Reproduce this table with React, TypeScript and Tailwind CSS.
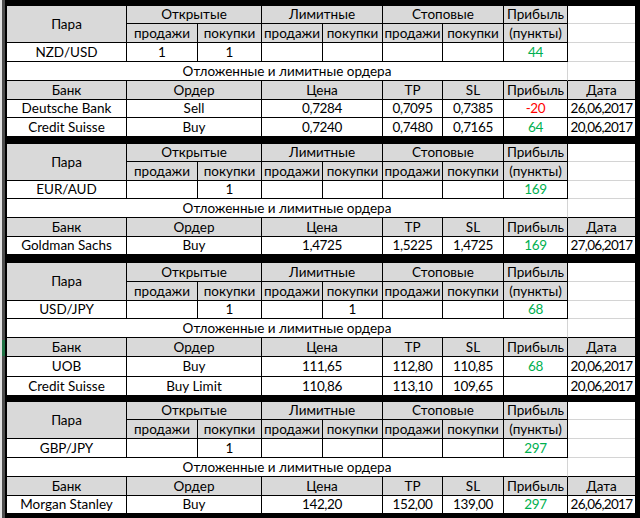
import React from "react";

type Order = {
  bank: string;
  order: string;
  price: string;
  tp: string;
  sl: string;
  profit: string;
  date: string;
};

type SectionProps = {
  pair: string;
  open: [string, string];
  limit: [string, string];
  stop: [string, string];
  profit: string;
  orders: Order[];
  rows: string;
};

const GRID = "grid grid-cols-[120px_71px_64px_61px_60px_60px_61px_64px_67px]";

function Cell({ className = "", children }: { className?: string; children?: React.ReactNode }) {
  return (
    <div className={`flex items-center justify-center pt-[1px] whitespace-nowrap border-r border-b border-black ${className}`}>
      {children}
    </div>
  );
}

function profitColor(p: string) {
  if (p.startsWith("-")) return "text-[#ff0000] tracking-[-0.4px]";
  return "text-[#00b050] tracking-[-0.4px]";
}

function Section({ pair, open, limit, stop, profit, orders, rows }: SectionProps) {
  const head = "bg-[#d9d9d9]";
  const free = "bg-white border-r-0 border-b-[#d4d4d4]";
  const num = "tracking-[-0.4px]";
  return (
    <div className={`${GRID} ${rows} bg-white`}>
      {/* header */}
      <Cell className={`${head} row-span-2`}>Пара</Cell>
      <Cell className={`${head} col-span-2`}>Открытые</Cell>
      <Cell className={`${head} col-span-2`}>Лимитные</Cell>
      <Cell className={`${head} col-span-2`}>Стоповые</Cell>
      <Cell className={head}>Прибыль</Cell>
      <Cell className={free} />

      <Cell className={head}>продажи</Cell>
      <Cell className={head}>покупки</Cell>
      <Cell className={head}>продажи</Cell>
      <Cell className={head}>покупки</Cell>
      <Cell className={head}>продажи</Cell>
      <Cell className={head}>покупки</Cell>
      <Cell className={head}>(пункты)</Cell>
      <Cell className={free} />

      {/* pair row */}
      <Cell>{pair}</Cell>
      <Cell>{open[0]}</Cell>
      <Cell>{open[1]}</Cell>
      <Cell>{limit[0]}</Cell>
      <Cell>{limit[1]}</Cell>
      <Cell>{stop[0]}</Cell>
      <Cell>{stop[1]}</Cell>
      <Cell className={profitColor(profit)}>{profit}</Cell>
      <Cell className={free} />

      <Cell className="col-span-8 border-r-[#d4d4d4]">Отложенные и лимитные ордера</Cell>
      <Cell className="border-r-0" />

      {/* orders */}
      <Cell className={head}>Банк</Cell>
      <Cell className={`${head} col-span-2`}>Ордер</Cell>
      <Cell className={`${head} col-span-2`}>Цена</Cell>
      <Cell className={head}>TP</Cell>
      <Cell className={head}>SL</Cell>
      <Cell className={head}>Прибыль</Cell>
      <Cell className={`${head} border-r-0`}>Дата</Cell>

      {orders.map((o) => (
        <React.Fragment key={o.bank + o.order}>
          <Cell>{o.bank}</Cell>
          <Cell className="col-span-2">{o.order}</Cell>
          <Cell className={`col-span-2 ${num}`}>{o.price}</Cell>
          <Cell className={num}>{o.tp}</Cell>
          <Cell className={num}>{o.sl}</Cell>
          <Cell className={profitColor(o.profit)}>{o.profit}</Cell>
          <Cell className="border-r-0 tracking-[-0.7px]">{o.date}</Cell>
        </React.Fragment>
      ))}
    </div>
  );
}

export default function App() {
  return (
    <div className="flex w-[640px] h-[518px] overflow-hidden bg-black font-['Lato',sans-serif] text-[13.5px] leading-none text-black">
      {/* excel row header strip */}
      <div className="flex flex-col w-[2px] bg-[#e2e2e2]" />
      <div className="flex flex-col w-[3px]">
        <div className="h-[340px] bg-[#4e4e4e]" />
        <div className="h-[16px] bg-[#217346]" />
        <div className="flex-1 bg-[#4e4e4e]" />
      </div>
      <div className="w-[2px]" />

      <div className="flex flex-col w-[628px]">
        <div className="h-[6px]" />
        <Section
          rows="grid-rows-[18px_19px_19px_19px_19px_18px_19px]"
          pair="NZD/USD"
          open={["1", "1"]}
          limit={["", ""]}
          stop={["", ""]}
          profit="44"
          orders={[
            { bank: "Deutsche Bank", order: "Sell", price: "0,7284", tp: "0,7095", sl: "0,7385", profit: "-20", date: "26,06,2017" },
            { bank: "Credit Suisse", order: "Buy", price: "0,7240", tp: "0,7480", sl: "0,7165", profit: "64", date: "20,06,2017" },
          ]}
        />
        <div className="h-[7px]" />
        <Section
          rows="grid-rows-[18px_19px_18px_19px_19px_18px]"
          pair="EUR/AUD"
          open={["", "1"]}
          limit={["", ""]}
          stop={["", ""]}
          profit="169"
          orders={[
            { bank: "Goldman Sachs", order: "Buy", price: "1,4725", tp: "1,5225", sl: "1,4725", profit: "169", date: "27,06,2017" },
          ]}
        />
        <div className="h-[8px]" />
        <Section
          rows="grid-rows-[19px_19px_18px_19px_19px_20px_19px]"
          pair="USD/JPY"
          open={["", "1"]}
          limit={["", "1"]}
          stop={["", ""]}
          profit="68"
          orders={[
            { bank: "UOB", order: "Buy", price: "111,65", tp: "112,80", sl: "110,85", profit: "68", date: "20,06,2017" },
            { bank: "Credit Suisse", order: "Buy Limit", price: "110,86", tp: "113,10", sl: "109,65", profit: "", date: "20,06,2017" },
          ]}
        />
        <div className="h-[6px]" />
        <Section
          rows="grid-rows-[18px_19px_19px_19px_19px_18px]"
          pair="GBP/JPY"
          open={["", "1"]}
          limit={["", ""]}
          stop={["", ""]}
          profit="297"
          orders={[
            { bank: "Morgan Stanley", order: "Buy", price: "142,20", tp: "152,00", sl: "139,00", profit: "297", date: "26,06,2017" },
          ]}
        />
      </div>
      <div className="flex-1" />
    </div>
  );
}
